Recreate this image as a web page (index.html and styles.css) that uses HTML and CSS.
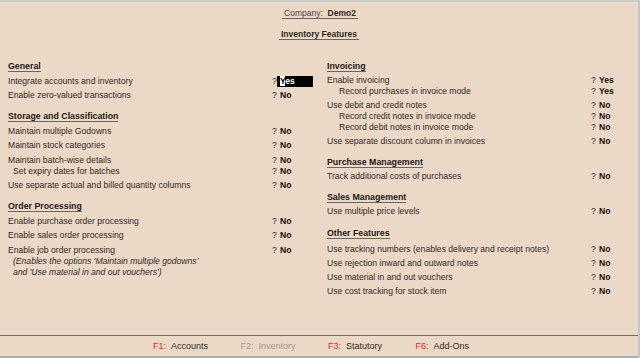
FILE: index.html
```html
<!DOCTYPE html>
<html lang="en">
<head>
    <meta charset="UTF-8">
    <meta name="viewport" content="width=device-width, initial-scale=1.0">
    <title>Inventory Features</title>
    <link rel="stylesheet" href="styles.css">
</head>
<body>
    <div class="screen">
        <!-- Judul -->
        <div class="title-block">
            <div class="title company"><span class="light">Company:</span>&nbsp; <b>Demo2</b></div>
            <div class="title"><b>Inventory Features</b></div>
        </div>

        <div class="columns">
            <!-- Kolom kiri -->
            <div class="column left">
                <div class="section">
                    <h3>General</h3>
                    <div class="row"><span class="label">Integrate accounts and inventory</span><span class="q">?</span><span class="val active"><span class="cursor">Y</span>es</span></div>
                    <div class="row"><span class="label">Enable zero-valued transactions</span><span class="q">?</span><span class="val">No</span></div>
                </div>
                <div class="section">
                    <h3>Storage and Classification</h3>
                    <div class="row"><span class="label">Maintain multiple Godowns</span><span class="q">?</span><span class="val">No</span></div>
                    <div class="row"><span class="label">Maintain stock categories</span><span class="q">?</span><span class="val">No</span></div>
                    <div class="row"><span class="label">Maintain batch-wise details</span><span class="q">?</span><span class="val">No</span></div>
                    <div class="row sub"><span class="label">Set expiry dates for batches</span><span class="q">?</span><span class="val">No</span></div>
                    <div class="row"><span class="label">Use separate actual and billed quantity columns</span><span class="q">?</span><span class="val">No</span></div>
                </div>
                <div class="section">
                    <h3>Order Processing</h3>
                    <div class="row"><span class="label">Enable purchase order processing</span><span class="q">?</span><span class="val">No</span></div>
                    <div class="row"><span class="label">Enable sales order processing</span><span class="q">?</span><span class="val">No</span></div>
                    <div class="row"><span class="label">Enable job order processing</span><span class="q">?</span><span class="val">No</span></div>
                    <div class="note">(Enables the options 'Maintain multiple godowns'<br>and 'Use material in and out vouchers')</div>
                </div>
            </div>

            <!-- Kolom kanan -->
            <div class="column right">
                <div class="section">
                    <h3>Invoicing</h3>
                    <div class="row"><span class="label">Enable invoicing</span><span class="q">?</span><span class="val">Yes</span></div>
                    <div class="row sub"><span class="label">Record purchases in invoice mode</span><span class="q">?</span><span class="val">Yes</span></div>
                    <div class="row"><span class="label">Use debit and credit notes</span><span class="q">?</span><span class="val">No</span></div>
                    <div class="row sub"><span class="label">Record credit notes in invoice mode</span><span class="q">?</span><span class="val">No</span></div>
                    <div class="row sub"><span class="label">Record debit notes in invoice mode</span><span class="q">?</span><span class="val">No</span></div>
                    <div class="row"><span class="label">Use separate discount column in invoices</span><span class="q">?</span><span class="val">No</span></div>
                </div>
                <div class="section">
                    <h3>Purchase Management</h3>
                    <div class="row"><span class="label">Track additional costs of purchases</span><span class="q">?</span><span class="val">No</span></div>
                </div>
                <div class="section">
                    <h3>Sales Management</h3>
                    <div class="row"><span class="label">Use multiple price levels</span><span class="q">?</span><span class="val">No</span></div>
                </div>
                <div class="section other">
                    <h3>Other Features</h3>
                    <div class="row first"><span class="label">Use tracking numbers (enables delivery and receipt notes)</span><span class="q">?</span><span class="val">No</span></div>
                    <div class="row"><span class="label">Use rejection inward and outward notes</span><span class="q">?</span><span class="val">No</span></div>
                    <div class="row"><span class="label">Use material in and out vouchers</span><span class="q">?</span><span class="val">No</span></div>
                    <div class="row"><span class="label">Use cost tracking for stock item</span><span class="q">?</span><span class="val">No</span></div>
                </div>
            </div>
        </div>

        <!-- Tombol fungsi -->
        <div class="footer">
            <div class="fkey"><span class="key">F1:</span>Accounts</div>
            <div class="fkey off"><span class="key">F2:</span>Inventory</div>
            <div class="fkey"><span class="key">F3:</span>Statutory</div>
            <div class="fkey"><span class="key">F6:</span>Add-Ons</div>
        </div>
    </div>
</body>
</html>
```

FILE: styles.css
```css
body {
    margin: 0;
    font-family: "Liberation Sans", Arial, sans-serif;
    font-size: 8.6px;
    color: #2e2a27;
}

* {
    box-sizing: border-box;
}

.screen {
    width: 640px;
    height: 358px;
    background-color: #ecd8c7;
    border-top: 2px solid #c9cdca;
    border-right: 2px solid #c3c7c9;
    display: flex;
    flex-direction: column;
}

.title-block {
    text-align: center;
    padding-top: 6px;
}

.title {
    display: inline-block;
    line-height: 10px;
    padding: 0 2px;
    border-bottom: 1px solid #6e6660;
    font-size: 8.5px;
}

.title.company {
    margin-left: 2px;
}

.title-block .title + .title {
    display: block;
    width: max-content;
    margin: 10px auto 0;
}

.light {
    color: #4a4542;
}

.columns {
    display: grid;
    grid-template-columns: 319px 319px;
    padding-top: 21px;
}

.column {
    padding-left: 8px;
}

.section + .section {
    margin-top: 10px;
}

.section.other {
    margin-top: 11px;
}

.section h3 {
    display: inline-block;
    margin: 0;
    font-size: 8.8px;
    line-height: 10px;
    font-weight: bold;
    color: #1c1a18;
    border-bottom: 1px solid #6e6660;
}

.row {
    display: flex;
    line-height: 11px;
    margin-top: 3px;
}

.left .row {
    margin-top: 3.5px;
}

.row.sub,
.left .row.sub {
    margin-top: 0;
}

.row.sub .label {
    padding-left: 5px;
}

.right .row.sub .label {
    padding-left: 12px;
}

.row.first {
    margin-top: 5px;
}

.label {
    width: 264px;
    flex-shrink: 0;
    white-space: nowrap;
}

.q {
    width: 8px;
}

.val {
    font-weight: bold;
    color: #111;
}

.val.active {
    width: 36px;
    margin-left: -3px;
    padding-left: 3px;
    background-color: #000;
    color: #fff;
}

.cursor {
    background-color: #fff;
    color: #000;
}

.note {
    font-style: italic;
    padding-left: 5px;
    line-height: 11px;
}

.footer {
    margin-top: auto;
    height: 23px;
    border-top: 1px solid #7a6b62;
    border-bottom: 2px solid #a8b0b4;
    display: flex;
    align-items: center;
    padding-left: 153px;
    font-size: 9px;
}

.fkey {
    width: 87.5px;
    color: #2e2a27;
}

.fkey .key {
    color: #e8232d;
    margin-right: 5px;
}

.fkey.off {
    color: #9c9895;
}

.fkey.off .key {
    color: #9c9895;
}
```
